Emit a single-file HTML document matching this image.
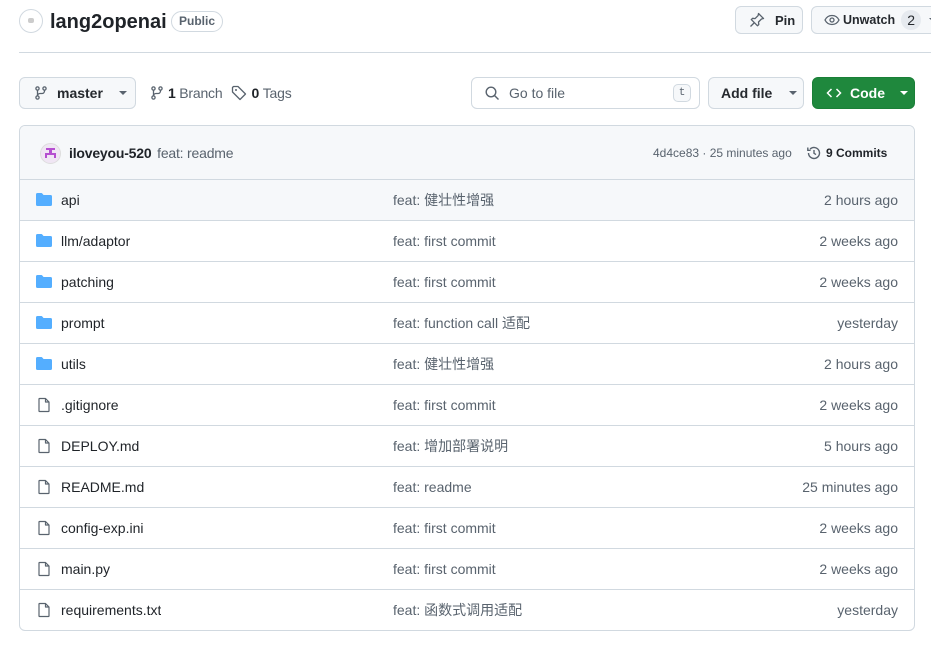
<!DOCTYPE html>
<html><head><meta charset="utf-8"><style>
*{box-sizing:border-box;margin:0;padding:0}
body{width:931px;height:645px;overflow:hidden;background:#fff;font-family:"Liberation Sans","Noto Sans CJK SC",sans-serif;font-size:14px;color:#1f2328;position:relative}
.abs{position:absolute}
.btn{position:absolute;border:1px solid #d1d9e0;border-radius:6px;background:#f6f8fa;display:flex;align-items:center;font-weight:bold;font-size:14px;color:#25292e}
svg{display:block}
.box{position:absolute;left:19px;top:125px;width:896px;height:506px;border:1px solid #d1d9e0;border-radius:6px;overflow:hidden}
.hdr{height:54px;background:#f6f8fa;border-bottom:1px solid #d1d9e0;position:relative}
.row{height:41px;border-top:1px solid #d1d9e0;position:relative}
.row .ic{position:absolute;left:16px;top:12px}
.row span{position:absolute;top:11px;height:18px;line-height:18px;overflow:hidden;white-space:nowrap}
.row .nm{left:41px}
.row .msg{left:373px;color:#59636e}
.row .dt{right:16px;color:#59636e}
</style></head><body>
<div class="abs" style="left:19px;top:9px;width:24px;height:24px;border-radius:50%;border:1px solid #d1d9e0;background:#fff"><div style="position:absolute;left:8px;top:8px;width:6px;height:5px;background:#ccc;border-radius:2px"></div></div>
<div class="abs" style="left:50px;top:10px;font-size:20px;font-weight:bold;color:#1f2328;line-height:24px">lang2openai</div>
<div class="abs" style="left:171px;top:11px;height:21px;padding:0 7px;border:1px solid #d1d9e0;border-radius:12px;font-size:12px;font-weight:bold;color:#59636e;line-height:19px">Public</div>
<div class="btn" style="left:735px;top:6px;width:68px;height:28px;padding-left:13px"><svg width="16" height="16" viewBox="0 0 16 16"><path d="M9.5 1.5l5 5-2 .5-3 3 .3 2.5-1.3 1.3L2.3 7.6 3.6 6.3l2.5.3 3-3z M5 11l-3.5 3.5" fill="none" stroke="#59636e" stroke-width="1.3" stroke-linejoin="round"/></svg><span style="margin-left:10px;font-size:13px">Pin</span></div>
<div class="btn" style="left:811px;top:6px;width:130px;height:28px;padding-left:12px"><svg width="16" height="16" viewBox="0 0 16 16"><path d="M1 8c1.5-3 4-4.5 7-4.5S13.5 5 15 8c-1.5 3-4 4.5-7 4.5S2.5 11 1 8z" fill="none" stroke="#59636e" stroke-width="1.3"/><circle cx="8" cy="8" r="2" fill="none" stroke="#59636e" stroke-width="1.3"/></svg><span style="margin-left:3px;font-size:12.5px">Unwatch</span><span style="margin-left:6px;width:20px;height:20px;border-radius:10px;background:#e6eaef;text-align:center;line-height:20px;font-weight:normal">2</span><span style="margin-left:8px;border-left:4px solid transparent;border-right:4px solid transparent;border-top:4px solid #59636e"></span></div>
<div class="abs" style="left:19px;top:52px;width:912px;height:1px;background:#d1d9e0"></div>
<div class="btn" style="left:19px;top:77px;width:117px;height:32px;padding-left:13px"><svg width="16" height="16" viewBox="0 0 16 16"><circle cx="4.5" cy="3.5" r="1.6" fill="none" stroke="#59636e" stroke-width="1.3"/><circle cx="11.5" cy="3.5" r="1.6" fill="none" stroke="#59636e" stroke-width="1.3"/><circle cx="4.5" cy="12.5" r="1.6" fill="none" stroke="#59636e" stroke-width="1.3"/><path d="M4.5 5v6M11.5 5v1a2.5 2.5 0 0 1-2.5 2.5H7a2.5 2.5 0 0 0-2.5 2.5" fill="none" stroke="#59636e" stroke-width="1.3"/></svg><span style="margin-left:8px">master</span><span style="margin-left:16px;border-left:4px solid transparent;border-right:4px solid transparent;border-top:4px solid #59636e"></span></div>
<div class="abs" style="left:149px;top:85px;display:flex;align-items:center;color:#59636e;letter-spacing:-0.2px"><svg width="16" height="16" viewBox="0 0 16 16"><circle cx="4.5" cy="3.5" r="1.6" fill="none" stroke="#59636e" stroke-width="1.3"/><circle cx="11.5" cy="3.5" r="1.6" fill="none" stroke="#59636e" stroke-width="1.3"/><circle cx="4.5" cy="12.5" r="1.6" fill="none" stroke="#59636e" stroke-width="1.3"/><path d="M4.5 5v6M11.5 5v1a2.5 2.5 0 0 1-2.5 2.5H7a2.5 2.5 0 0 0-2.5 2.5" fill="none" stroke="#59636e" stroke-width="1.3"/></svg><b style="color:#1f2328;margin-left:3px">1</b>&nbsp;Branch<svg style="margin-left:9px" width="16" height="16" viewBox="0 0 16 16"><path d="M1.5 2.5v4.5l7.5 7.5 5.5-5.5L7 1.5H2.5z" fill="none" stroke="#59636e" stroke-width="1.3" stroke-linejoin="round"/><circle cx="5" cy="5" r="1" fill="#59636e"/></svg><b style="color:#1f2328;margin-left:4px">0</b>&nbsp;Tags</div>
<div class="abs" style="left:471px;top:77px;width:229px;height:32px;border:1px solid #d1d9e0;border-radius:6px;display:flex;align-items:center;padding-left:12px;color:#59636e"><svg width="16" height="16" viewBox="0 0 16 16"><circle cx="7" cy="7" r="4.8" fill="none" stroke="#59636e" stroke-width="1.4"/><path d="M10.5 10.5l4 4" stroke="#59636e" stroke-width="1.4"/></svg><span style="margin-left:9px">Go to file</span><span style="position:absolute;right:8px;top:6px;width:18px;height:18px;border:1px solid #d1d9e0;border-radius:5px;font-family:'Liberation Mono',monospace;font-size:11px;text-align:center;line-height:16px;background:#f6f8fa">t</span></div>
<div class="btn" style="left:708px;top:77px;width:96px;height:32px;padding-left:12px"><span>Add file</span><span style="margin-left:17px;border-left:4px solid transparent;border-right:4px solid transparent;border-top:4px solid #59636e"></span></div>
<div class="btn" style="left:812px;top:77px;width:103px;height:32px;padding-left:13px;background:#1f883d;border-color:#1a7f37;color:#fff"><svg width="16" height="16" viewBox="0 0 16 16"><path d="M5.5 4L1.5 8l4 4M10.5 4l4 4-4 4" fill="none" stroke="#fff" stroke-width="1.5"/></svg><span style="margin-left:8px">Code</span><span style="margin-left:15px;border-left:4px solid transparent;border-right:4px solid transparent;border-top:4px solid #fff"></span></div>
<svg width="0" height="0" style="position:absolute"><defs>
<symbol id="fd" viewBox="0 0 16 16"><path d="M0 2.5A1.5 1.5 0 0 1 1.5 1h3.7c.5 0 .9.2 1.2.6l.9 1.2c.1.1.2.2.4.2h6.8A1.5 1.5 0 0 1 16 4.5v8A1.5 1.5 0 0 1 14.5 14h-13A1.5 1.5 0 0 1 0 12.5z" fill="#54aeff"/></symbol>
<symbol id="fl" viewBox="0 0 16 16"><path d="M3.5 1.5h6l3.5 3.5v9a.5.5 0 0 1-.5.5h-9a.5.5 0 0 1-.5-.5v-12a.5.5 0 0 1 .5-.5zM9.5 1.5V5h3.5" fill="none" stroke="#59636e" stroke-width="1.2" stroke-linejoin="round"/></symbol>
</defs></svg>
<div class="box">
<div class="hdr">
<div class="abs" style="left:20px;top:17px;width:21px;height:21px;border-radius:50%;background:#f0e6f4;border:1px solid #ddd"><svg width="19" height="19" viewBox="0 0 19 19"><path d="M5 4h9v2H5zM8 6h3v3H8zM4 9h11v2H4zM4 11h2v3H4zM13 11h2v3h-2z" fill="#b54fd0"/></svg></div>
<div class="abs" style="left:49px;top:19px;letter-spacing:-0.2px"><b>iloveyou-520</b> <span style="color:#59636e;margin-left:2px">feat: readme</span></div>
<div class="abs" style="left:633px;top:20px;font-size:12px;color:#59636e">4d4ce83 · 25 minutes ago</div>
<div class="abs" style="left:786px;top:19px;display:flex;align-items:center;font-size:12px;font-weight:bold"><svg width="16" height="16" viewBox="0 0 16 16"><path d="M2.5 8a5.5 5.5 0 1 0 1.6-3.9M1.8 2.5v2.8h2.8" fill="none" stroke="#59636e" stroke-width="1.4"/><path d="M8 5v3.3l2 1.3" fill="none" stroke="#59636e" stroke-width="1.4"/></svg><span style="margin-left:4px">9 Commits</span></div>
</div>
<div class="row" style="background:#f6f8fa;border-top:none;height:40px"><svg class="ic" width="16" height="16"><use href="#fd"/></svg><span class="nm">api</span><span class="msg">feat: 健壮性增强</span><span class="dt">2 hours ago</span></div>
<div class="row"><svg class="ic" width="16" height="16"><use href="#fd"/></svg><span class="nm">llm/adaptor</span><span class="msg">feat: first commit</span><span class="dt">2 weeks ago</span></div>
<div class="row"><svg class="ic" width="16" height="16"><use href="#fd"/></svg><span class="nm">patching</span><span class="msg">feat: first commit</span><span class="dt">2 weeks ago</span></div>
<div class="row"><svg class="ic" width="16" height="16"><use href="#fd"/></svg><span class="nm">prompt</span><span class="msg">feat: function call 适配</span><span class="dt">yesterday</span></div>
<div class="row"><svg class="ic" width="16" height="16"><use href="#fd"/></svg><span class="nm">utils</span><span class="msg">feat: 健壮性增强</span><span class="dt">2 hours ago</span></div>
<div class="row"><svg class="ic" width="16" height="16"><use href="#fl"/></svg><span class="nm">.gitignore</span><span class="msg">feat: first commit</span><span class="dt">2 weeks ago</span></div>
<div class="row"><svg class="ic" width="16" height="16"><use href="#fl"/></svg><span class="nm">DEPLOY.md</span><span class="msg">feat: 增加部署说明</span><span class="dt">5 hours ago</span></div>
<div class="row"><svg class="ic" width="16" height="16"><use href="#fl"/></svg><span class="nm">README.md</span><span class="msg">feat: readme</span><span class="dt">25 minutes ago</span></div>
<div class="row"><svg class="ic" width="16" height="16"><use href="#fl"/></svg><span class="nm">config-exp.ini</span><span class="msg">feat: first commit</span><span class="dt">2 weeks ago</span></div>
<div class="row"><svg class="ic" width="16" height="16"><use href="#fl"/></svg><span class="nm">main.py</span><span class="msg">feat: first commit</span><span class="dt">2 weeks ago</span></div>
<div class="row"><svg class="ic" width="16" height="16"><use href="#fl"/></svg><span class="nm">requirements.txt</span><span class="msg">feat: 函数式调用适配</span><span class="dt">yesterday</span></div>
</div>
</body></html>
